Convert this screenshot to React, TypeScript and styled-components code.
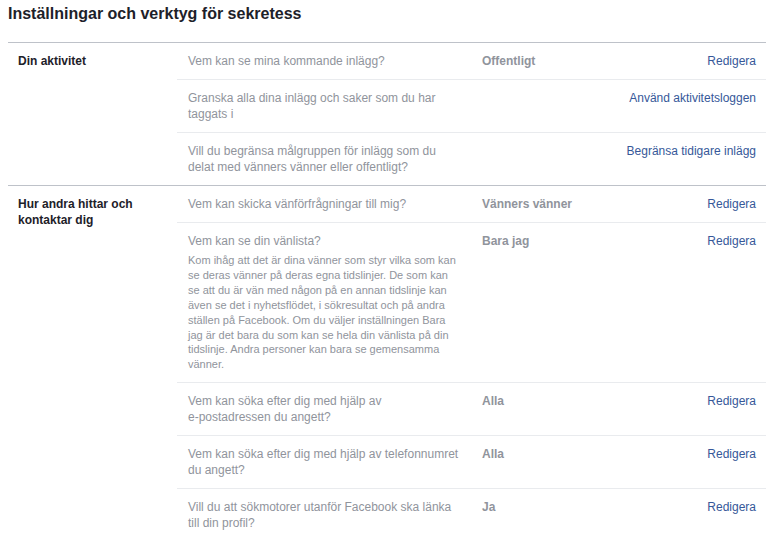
import React from 'react';
import styled, { createGlobalStyle } from 'styled-components';

type Setting = {
  question: React.ReactNode;
  note?: string;
  value?: string;
  action: string;
};

type Section = {
  label: string;
  settings: Setting[];
};

// keeps a hyphenated word on one line
const NoWrap = styled.span`
  white-space: nowrap;
`;

const sections: Section[] = [
  {
    label: 'Din aktivitet',
    settings: [
      { question: 'Vem kan se mina kommande inlägg?', value: 'Offentligt', action: 'Redigera' },
      { question: 'Granska alla dina inlägg och saker som du har taggats i', action: 'Använd aktivitetsloggen' },
      { question: 'Vill du begränsa målgruppen för inlägg som du delat med vänners vänner eller offentligt?', action: 'Begränsa tidigare inlägg' },
    ],
  },
  {
    label: 'Hur andra hittar och kontaktar dig',
    settings: [
      { question: 'Vem kan skicka vänförfrågningar till mig?', value: 'Vänners vänner', action: 'Redigera' },
      {
        question: 'Vem kan se din vänlista?',
        note: 'Kom ihåg att det är dina vänner som styr vilka som kan se deras vänner på deras egna tidslinjer. De som kan se att du är vän med någon på en annan tidslinje kan även se det i nyhetsflödet, i sökresultat och på andra ställen på Facebook. Om du väljer inställningen Bara jag är det bara du som kan se hela din vänlista på din tidslinje. Andra personer kan bara se gemensamma vänner.',
        value: 'Bara jag',
        action: 'Redigera',
      },
      {
        question: <>Vem kan söka efter dig med hjälp av <NoWrap>e-postadressen</NoWrap> du angett?</>,
        value: 'Alla',
        action: 'Redigera',
      },
      { question: 'Vem kan söka efter dig med hjälp av telefonnumret du angett?', value: 'Alla', action: 'Redigera' },
      { question: 'Vill du att sökmotorer utanför Facebook ska länka till din profil?', value: 'Ja', action: 'Redigera' },
    ],
  },
];

const App: React.FC = () => {
  return (
    <>
      <GlobalStyle />
      <Page>
        <Title>Inställningar och verktyg för sekretess</Title>
        {sections.map((section) => (
          <SectionBlock key={section.label}>
            <SectionLabel>{section.label}</SectionLabel>
            <Rows>
              {section.settings.map((setting, i) => (
                <Row key={i}>
                  <QuestionCell>
                    <Question>{setting.question}</Question>
                    {setting.note && <Note>{setting.note}</Note>}
                  </QuestionCell>
                  <Value>{setting.value}</Value>
                  <ActionLink href="#">{setting.action}</ActionLink>
                </Row>
              ))}
            </Rows>
          </SectionBlock>
        ))}
      </Page>
    </>
  );
};

export default App;

// styled components

const GlobalStyle = createGlobalStyle`
  body {
    margin: 0;
    background: #ffffff;
    font-family: "Liberation Sans", Arial, Helvetica, sans-serif;
  }
`;

const Page = styled.div`
  width: 758px;
  margin-left: 8px;
  font-size: 12px;
  line-height: 16px;
  color: #1d2129;
`;

const Title = styled.h2`
  margin: 4px 0 18px;
  font-size: 16px;
  line-height: 20px;
  font-weight: 700;
  color: #1d2129;
`;

// section

const SectionBlock = styled.div`
  display: flex;
  border-top: 1px solid #bec2c9;
`;

const SectionLabel = styled.div`
  box-sizing: border-box;
  flex: 0 0 169px;
  padding: 10px 20px 10px 10px;
  font-weight: 700;
  color: #1d2129;
`;

const Rows = styled.div`
  flex: 1;
  display: flex;
  flex-direction: column;
`;

// rows

const Row = styled.div`
  display: flex;
  align-items: flex-start;
  padding: 10px 10px 10px 11px;

  & + & {
    border-top: 1px solid #e9ebee;
  }
`;

const QuestionCell = styled.div`
  flex: 0 0 274px;
  margin-right: 20px;
`;

const Question = styled.div`
  color: #90949c;
`;

const Note = styled.div`
  margin-top: 4px;
  font-size: 11px;
  line-height: 14.9px;
  color: #90949c;
`;

const Value = styled.div`
  flex: 1;
  font-weight: 700;
  color: #90949c;
`;

const ActionLink = styled.a`
  white-space: nowrap;
  color: #365899;
  text-decoration: none;
`;
